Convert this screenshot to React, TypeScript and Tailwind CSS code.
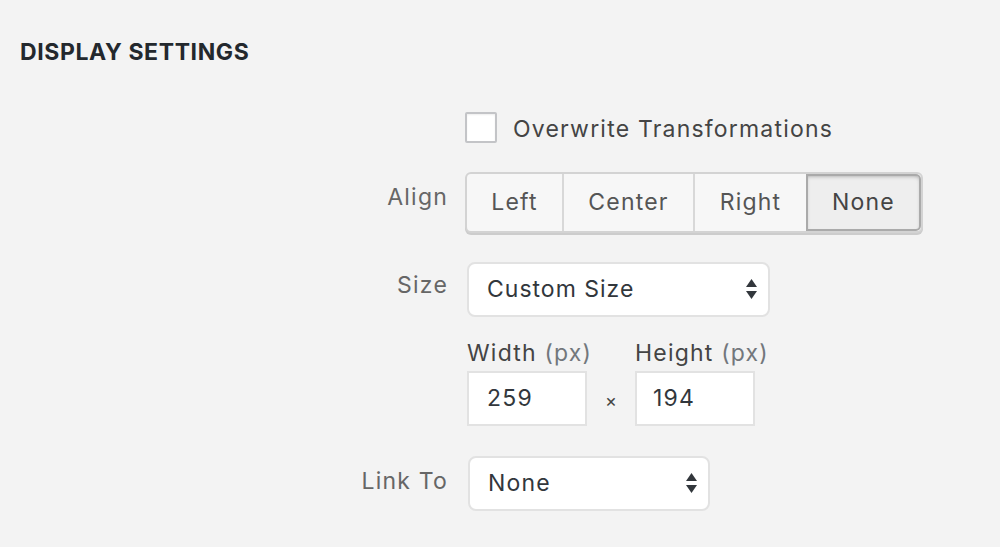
const font = "font-['Inter','Liberation_Sans',sans-serif]";

function Arrows() {
  return (
    <svg width="11" height="21" viewBox="0 0 11 21" className="shrink-0">
      <path d="M5.5 0 L11 8 L0 8 Z" fill="#32373c" />
      <path d="M0 12 L11 12 L5.5 20 Z" fill="#32373c" />
    </svg>
  );
}

function Label({ children }: { children: React.ReactNode }) {
  return (
    <div className="w-[448px] shrink-0 text-right text-[23px] tracking-[1.2px] text-[#666] leading-none">
      {children}
    </div>
  );
}

export default function App() {
  return (
    <div className={`w-[1000px] h-[547px] overflow-hidden bg-[#f3f3f3] ${font}`}>
      <h2 className="pl-[20px] pt-[39px] text-[23px] font-bold leading-[26px] tracking-[0.6px] text-[#23282d] uppercase">
        Display Settings
      </h2>

      {/* overwrite */}
      <div className="mt-[47px] flex items-center pl-[465px]">
        <div className="w-[32px] h-[31px] rounded-[2px] border-2 border-[#c3c4c7] bg-white shadow-[inset_0_1px_2px_rgba(0,0,0,0.07)]" />
        <span className="relative top-[2px] ml-[16px] text-[23px] tracking-[1.2px] text-[#444] leading-none">
          Overwrite Transformations
        </span>
      </div>

      {/* align */}
      <div className="mt-[29px] flex items-start">
        <Label>
          <span className="relative top-[14px]">Align</span>
        </Label>
        <div className="ml-[17px] flex h-[61px] rounded-[6px] border-2 border-[#d3d3d3] bg-[#f7f7f7] shadow-[0_2px_0_#ccc] overflow-hidden text-[23px] tracking-[1.2px] text-[#555]">
          <div className="w-[97px] flex items-center justify-center border-r-2 border-[#d8d8d8]">Left</div>
          <div className="w-[131px] flex items-center justify-center border-r-2 border-[#d8d8d8]">Center</div>
          <div className="w-[111px] flex items-center justify-center">Right</div>
          <div className="w-[115px] flex items-center justify-center border-2 border-[#aaa] rounded-r-[5px] bg-[#eee] shadow-[inset_0_2px_5px_-3px_rgba(0,0,0,0.5)] text-[#444]">
            None
          </div>
        </div>
      </div>

      {/* size */}
      <div className="mt-[29px] flex items-start">
        <Label>
          <span className="relative top-[12px]">Size</span>
        </Label>
        <div className="ml-[19px] flex h-[55px] w-[303px] items-center justify-between rounded-[8px] border-2 border-[#e2e2e2] bg-white pl-[18px] pr-[11px] text-[23px] tracking-[1px] text-[#32373c]">
          <span>Custom Size</span>
          <Arrows />
        </div>
      </div>

      {/* custom size */}
      <div className="mt-[22px] flex pl-[467px]">
        <div className="flex w-[120px] flex-col">
          <span className="whitespace-nowrap text-[23px] leading-[28px] tracking-[1.2px] text-[#444]">
            Width <span className="text-[#72777c]">(px)</span>
          </span>
          <div className="mt-[4px] flex h-[55px] w-[120px] items-center border-2 border-[#e2e2e2] bg-white pl-[18px] text-[23px] tracking-[1.2px] text-[#32373c]">
            259
          </div>
        </div>
        <div className="w-[48px] flex items-end justify-center pb-[12px] text-[18px] text-[#444]">×</div>
        <div className="flex w-[120px] flex-col">
          <span className="whitespace-nowrap text-[23px] leading-[28px] tracking-[1.2px] text-[#444]">
            Height <span className="text-[#72777c]">(px)</span>
          </span>
          <div className="mt-[4px] flex h-[55px] w-[120px] items-center border-2 border-[#e2e2e2] bg-white pl-[16px] text-[23px] tracking-[1.2px] text-[#32373c]">
            194
          </div>
        </div>
      </div>

      {/* link to */}
      <div className="mt-[30px] flex items-start">
        <Label>
          <span className="relative top-[14px]">Link To</span>
        </Label>
        <div className="ml-[20px] flex h-[55px] w-[242px] items-center justify-between rounded-[8px] border-2 border-[#e2e2e2] bg-white pl-[18px] pr-[11px] text-[23px] tracking-[1.2px] text-[#32373c]">
          <span>None</span>
          <Arrows />
        </div>
      </div>
    </div>
  );
}
